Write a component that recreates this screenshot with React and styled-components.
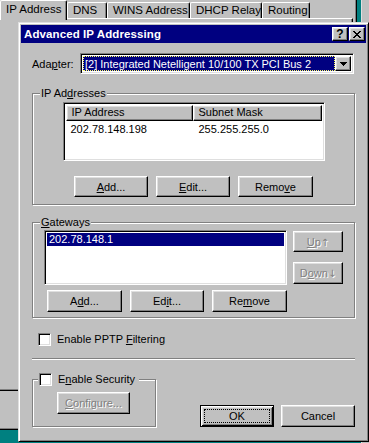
import React from "react";
import styled, { createGlobalStyle, css } from "styled-components";

const GlobalStyle = createGlobalStyle`
  html, body { margin: 0; padding: 0; background: #008080; }
  * { box-sizing: border-box; }
  body {
    font-family: "Liberation Sans", Arial, "DejaVu Sans", sans-serif;
    font-size: 11px;
    color: #000;
  }
`;

const raised = css`
  border: 1px solid;
  border-color: #fff #000 #000 #fff;
  box-shadow: inset -1px -1px 0 #808080, inset 1px 1px 0 #dfdfdf;
`;

const sunken = css`
  border: 1px solid;
  border-color: #808080 #fff #fff #808080;
  box-shadow: inset 1px 1px 0 #000, inset -1px -1px 0 #dfdfdf;
`;

const etched = css`
  border: 1px solid #808080;
  box-shadow: inset 1px 1px 0 #fff, 1px 1px 0 #fff;
`;

const Desktop = styled.div`
  position: relative;
  width: 369px;
  height: 443px;
  overflow: hidden;
  background: #008080;
`;

/* property sheet behind the dialog */
const Sheet = styled.div`
  position: absolute;
  left: -4px;
  top: 0;
  width: 361px;
  height: 430px;
  background: #c0c0c0;
  border-right: 1px solid #000;
  border-bottom: 1px solid #000;
  box-shadow: inset -1px -1px 0 #808080;
`;

const BackWindow = styled.div`
  position: absolute;
  left: 361px;
  top: 0;
  width: 20px;
  height: 443px;
  background: #c0c0c0;
  border-left: 1px solid #dfdfdf;
`;

const TabStrip = styled.div`
  display: flex;
  align-items: flex-start;
  height: 20px;
  padding-left: 4px;
`;

const Tab = styled.div`
  position: relative;
  width: ${(p) => p.$w}px;
  height: ${(p) => (p.$active ? 20 : 16)}px;
  margin-top: ${(p) => (p.$active ? 0 : 2)}px;
  z-index: ${(p) => (p.$active ? 2 : 0)};
  background: #c0c0c0;
  border-top: 1px solid #fff;
  border-left: 1px solid #fff;
  border-right: 1px solid #000;
  border-radius: 2px 2px 0 0;
  box-shadow: inset -1px 0 0 #808080;
  padding-left: 5px;
  font-size: 11.5px;
  line-height: ${(p) => (p.$active ? 17 : 15)}px;
  white-space: nowrap;
`;

const TabPage = styled.div`
  margin: -2px 0 0 2px;
  width: 355px;
  height: 373px;
  border-top: 1px solid #fff;
  border-left: 1px solid #fff;
  border-right: 1px solid #000;
  border-bottom: 1px solid #000;
  box-shadow: inset -1px -1px 0 #808080;
`;

/* the dialog */
const Dialog = styled.div`
  position: absolute;
  left: 18px;
  top: 22px;
  width: 351px;
  height: 420px;
  background: #c0c0c0;
  border: 1px solid;
  border-color: #dfdfdf #000 #000 #dfdfdf;
  box-shadow: inset 1px 1px 0 #fff, inset -1px -1px 0 #808080;
  padding: 2px;
  display: flex;
  flex-direction: column;
`;

const TitleBar = styled.div`
  height: 18px;
  background: #000080;
  display: flex;
  align-items: center;
  padding: 0 1px 0 3px;
`;

const Title = styled.div`
  flex: 1;
  color: #fff;
  font-weight: bold;
  font-size: 11.5px;
  letter-spacing: 0.1px;
`;

const CaptionButton = styled.div`
  ${raised};
  width: 16px;
  height: 14px;
  margin-left: ${(p) => p.$gap || 0}px;
  background: #c0c0c0;
  display: flex;
  align-items: center;
  justify-content: center;
  font-weight: bold;
  font-size: 12px;
  line-height: 12px;
`;

const Body = styled.div`
  flex: 1;
  padding: 10px 11px 12px;
  display: flex;
  flex-direction: column;
`;

const AdapterRow = styled.div`
  display: flex;
  align-items: center;
  height: 21px;
`;

const FieldLabel = styled.div`
  width: 48px;
`;

const Combo = styled.div`
  ${sunken};
  width: 274px;
  height: 21px;
  padding: 2px;
  display: flex;
  background: #fff;
`;

const ComboValue = styled.div`
  flex: 1;
  background: #000080;
  color: #fff;
  border: 1px dotted #ffff60;
  padding-left: 1px;
  line-height: 14px;
  white-space: nowrap;
  overflow: hidden;
`;

const ArrowButton = styled.div`
  ${raised};
  width: 16px;
  background: #c0c0c0;
  display: flex;
  align-items: center;
  justify-content: center;
`;

const Group = styled.div`
  ${etched};
  position: relative;
  width: ${(p) => p.$w}px;
  height: ${(p) => p.$h}px;
  margin-top: ${(p) => p.$mt}px;
  padding: ${(p) => p.$pad};
`;

const GroupLabel = styled.div`
  position: absolute;
  top: -7px;
  left: ${(p) => p.$left || 7}px;
  padding: 0 ${(p) => p.$padR || 1}px 0 1px;
  background: #c0c0c0;
  line-height: 13px;
  display: flex;
  align-items: center;
  gap: 6px;
  white-space: nowrap;
`;

const ListView = styled.div`
  ${sunken};
  width: ${(p) => p.$w}px;
  height: ${(p) => p.$h}px;
  margin: ${(p) => p.$m || "0"};
  background: #fff;
  padding: 2px;
  overflow: hidden;
`;

const Header = styled.div`
  display: flex;
  height: 16px;
  background: #c0c0c0;
`;

const HeaderCell = styled.div`
  ${raised};
  width: ${(p) => p.$w}px;
  padding-left: 5px;
  line-height: 13px;
`;

const Row = styled.div`
  display: flex;
  height: 13px;
  line-height: 13px;
  margin-top: ${(p) => p.$mt || 0}px;
  background: ${(p) => (p.$selected ? "#000080" : "transparent")};
  color: ${(p) => (p.$selected ? "#fff" : "#000")};
`;

const Cell = styled.div`
  width: ${(p) => p.$w}px;
  padding-left: ${(p) => p.$pl}px;
`;

const ButtonRow = styled.div`
  display: flex;
  gap: 8px;
  justify-content: ${(p) => p.$justify || "center"};
  margin-top: ${(p) => p.$mt || 0}px;
  padding-left: ${(p) => p.$pl || 0}px;
`;

const Button = styled.div`
  ${raised};
  position: relative;
  width: ${(p) => p.$w}px;
  height: ${(p) => p.$h || 21}px;
  background: #c0c0c0;
  display: flex;
  align-items: center;
  justify-content: center;
  white-space: nowrap;
  color: ${(p) => (p.$disabled ? "#808080" : "#000")};
  text-shadow: ${(p) => (p.$disabled ? "1px 1px 0 #fff" : "none")};
  ${(p) =>
    p.$default &&
    css`
      border-color: #000;
      box-shadow: inset 1px 1px 0 #fff, inset -1px -1px 0 #000,
        inset 2px 2px 0 #dfdfdf, inset -2px -2px 0 #808080;
      &::after {
        content: "";
        position: absolute;
        inset: 3px;
        border: 1px dotted #000;
      }
    `}
`;

const Arrow = styled.span`
  font-family: "DejaVu Sans", sans-serif;
  font-size: 10px;
`;

const GatewayGrid = styled.div`
  display: grid;
  grid-template-columns: 243px 50px;
  column-gap: 6px;
  row-gap: 5px;
`;

const SideButtons = styled.div`
  display: flex;
  flex-direction: column;
  gap: 10px;
  padding-top: 1px;
`;

const CheckRow = styled.label`
  display: flex;
  align-items: center;
  gap: 6px;
  margin-top: ${(p) => p.$mt || 0}px;
  padding-left: ${(p) => p.$pl || 0}px;
  line-height: 13px;
`;

const CheckBox = styled.span`
  ${sunken};
  display: block;
  width: 13px;
  height: 13px;
  background: #fff;
`;

const Separator = styled.div`
  margin-top: 12px;
  height: 2px;
  border-top: 1px solid #808080;
  border-bottom: 1px solid #fff;
`;

const BottomRow = styled.div`
  display: flex;
  align-items: flex-end;
  justify-content: space-between;
  margin-top: 19px;
`;

const DialogButtons = styled.div`
  display: flex;
  gap: 7px;
`;

const CloseGlyph = () => (
  <svg width="8" height="7" viewBox="0 0 8 7" shapeRendering="crispEdges">
    <path
      fill="#000"
      d="M0 0h2v1H0zM6 0h2v1H6zM1 1h2v1H1zM5 1h2v1H5zM2 2h4v1H2zM3 3h2v1H3zM2 4h4v1H2zM1 5h2v1H1zM5 5h2v1H5zM0 6h2v1H0zM6 6h2v1H6z"
    />
  </svg>
);

const DownGlyph = () => (
  <svg width="7" height="4" viewBox="0 0 7 4" shapeRendering="crispEdges">
    <path fill="#000" d="M0 0h7v1H0zM1 1h5v1H1zM2 2h3v1H2zM3 3h1v1H3z" />
  </svg>
);

const tabs = [
  { label: "IP Address", w: 67, active: true },
  { label: "DNS", w: 40 },
  { label: "WINS Address", w: 83 },
  { label: "DHCP Relay", w: 72 },
  { label: "Routing", w: 48 },
];

export default function App() {
  return (
    <>
      <GlobalStyle />
      <Desktop>
        <BackWindow />
        <Sheet>
          <TabStrip>
            {tabs.map((t) => (
              <Tab key={t.label} $w={t.w} $active={t.active}>
                {t.label}
              </Tab>
            ))}
          </TabStrip>
          <TabPage />
        </Sheet>

        <Dialog>
          <TitleBar>
            <Title>Advanced IP Addressing</Title>
            <CaptionButton>?</CaptionButton>
            <CaptionButton $gap={1}>
              <CloseGlyph />
            </CaptionButton>
          </TitleBar>

          <Body>
            <AdapterRow>
              <FieldLabel>
                Ada<u>p</u>ter:
              </FieldLabel>
              <Combo>
                <ComboValue>[2] Integrated Netelligent 10/100 TX PCI Bus 2</ComboValue>
                <ArrowButton>
                  <DownGlyph />
                </ArrowButton>
              </Combo>
            </AdapterRow>

            <Group $w={323} $h={112} $mt={19} $pad="8px 0 0 0">
              <GroupLabel>
                <span>
                  IP Ad<u>d</u>resses
                </span>
              </GroupLabel>
              <ListView $w={262} $h={59} $m="0 auto">
                <Header>
                  <HeaderCell $w={127}>IP Address</HeaderCell>
                  <HeaderCell $w={129}>Subnet Mask</HeaderCell>
                </Header>
                <Row $mt={2}>
                  <Cell $w={127} $pl={5}>202.78.148.198</Cell>
                  <Cell $w={129} $pl={6}>255.255.255.0</Cell>
                </Row>
              </ListView>
              <ButtonRow $mt={15}>
                <Button $w={74}>
                  <span>
                    <u>A</u>dd...
                  </span>
                </Button>
                <Button $w={74}>
                  <span>
                    <u>E</u>dit...
                  </span>
                </Button>
                <Button $w={75}>
                  <span>
                    Remo<u>v</u>e
                  </span>
                </Button>
              </ButtonRow>
            </Group>

            <Group $w={323} $h={96} $mt={17} $pad="7px 0 0 11px">
              <GroupLabel>
                <span>
                  <u>G</u>ateways
                </span>
              </GroupLabel>
              <GatewayGrid>
                <ListView $w={243} $h={55}>
                  <Row $selected>
                    <Cell $w={239} $pl={2}>202.78.148.1</Cell>
                  </Row>
                </ListView>
                <SideButtons>
                  <Button $w={50} $disabled>
                    <span>
                      <u>U</u>p<Arrow>↑</Arrow>
                    </span>
                  </Button>
                  <Button $w={50} $h={22} $disabled>
                    <span>
                      D<u>o</u>wn<Arrow>↓</Arrow>
                    </span>
                  </Button>
                </SideButtons>
                <ButtonRow $justify="flex-start" $pl={3}>
                  <Button $w={75} $h={22}>
                    <span>
                      A<u>d</u>d...
                    </span>
                  </Button>
                  <Button $w={74} $h={22}>
                    <span>
                      Ed<u>i</u>t...
                    </span>
                  </Button>
                  <Button $w={75} $h={22}>
                    <span>
                      Re<u>m</u>ove
                    </span>
                  </Button>
                </ButtonRow>
              </GatewayGrid>
            </Group>

            <CheckRow $mt={15} $pl={6}>
              <CheckBox />
              <span>
                Enable PPTP <u>F</u>iltering
              </span>
            </CheckRow>

            <Separator />

            <BottomRow>
              <Group $w={124} $h={48} $mt={0} $pad="12px 0 0 24px">
                <GroupLabel $left={5} $padR={4}>
                  <CheckBox />
                  <span>
                    E<u>n</u>able Security
                  </span>
                </GroupLabel>
                <Button $w={73} $h={22} $disabled>
                  <span>
                    <u>C</u>onfigure...
                  </span>
                </Button>
              </Group>
              <DialogButtons>
                <Button $w={74} $h={22} $default>
                  OK
                </Button>
                <Button $w={74} $h={22}>
                  Cancel
                </Button>
              </DialogButtons>
            </BottomRow>
          </Body>
        </Dialog>
      </Desktop>
    </>
  );
}
